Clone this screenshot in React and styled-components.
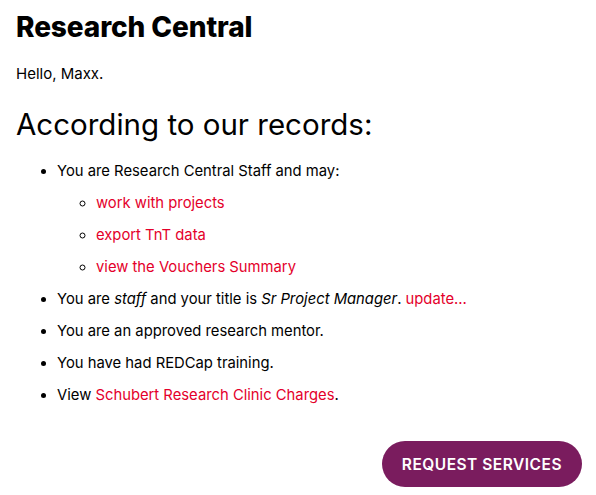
import styled, { createGlobalStyle } from "styled-components";

const GlobalStyle = createGlobalStyle`
  body {
    margin: 0;
    background: #ffffff;
    font-family: Inter, "Noto Sans", Arial, sans-serif;
    color: #000000;
  }
`;

const Page = styled.div`
  padding: 11px 14px 8px 16px;
`;

const Title = styled.h1`
  margin: 0;
  font-size: 28px;
  font-weight: 800;
  line-height: 32px;
  letter-spacing: -0.1px;
`;

const Greeting = styled.p`
  margin: 20px 0 0;
  font-size: 15px;
  line-height: 22px;
`;

const Heading = styled.h2`
  margin: 20px 0 0;
  font-size: 29.5px;
  font-weight: 400;
  line-height: 38px;
`;

const List = styled.ul`
  margin: ${(p) => (p.$nested ? "10px 0 0" : "17px 0 0")};
  padding-left: ${(p) => (p.$nested ? "39px" : "41px")};
  list-style-type: ${(p) => (p.$nested ? "circle" : "disc")};
  font-size: 14.8px;
  line-height: 22px;
`;

const Item = styled.li`
  & + & {
    margin-top: 10px;
  }
`;

const Link = styled.a`
  color: #e4002b;
  text-decoration: none;
  cursor: pointer;
`;

const Footer = styled.div`
  display: flex;
  justify-content: flex-end;
  margin-top: 35px;
`;

const RequestButton = styled.button`
  background: #7a1c5e;
  color: #ffffff;
  border: none;
  border-radius: 23px;
  height: 46px;
  padding: 0 20px;
  font-family: Inter, "Noto Sans", Arial, sans-serif;
  font-size: 15.5px;
  font-weight: 600;
  letter-spacing: 0.5px;
  cursor: pointer;
`;

export default function App() {
  return (
    <Page>
      <GlobalStyle />
      <Title>Research Central</Title>
      <Greeting>Hello, Maxx.</Greeting>
      <Heading>According to our records:</Heading>
      <List>
        <Item>
          You are Research Central Staff and may:
          <List $nested>
            <Item><Link>work with projects</Link></Item>
            <Item><Link>export TnT data</Link></Item>
            <Item><Link>view the Vouchers Summary</Link></Item>
          </List>
        </Item>
        <Item>
          You are <em>staff</em> and your title is <em>Sr Project Manager</em>.{" "}
          <Link>update...</Link>
        </Item>
        <Item>You are an approved research mentor.</Item>
        <Item>You have had REDCap training.</Item>
        <Item>
          View <Link>Schubert Research Clinic Charges</Link>.
        </Item>
      </List>
      <Footer>
        <RequestButton>REQUEST SERVICES</RequestButton>
      </Footer>
    </Page>
  );
}
